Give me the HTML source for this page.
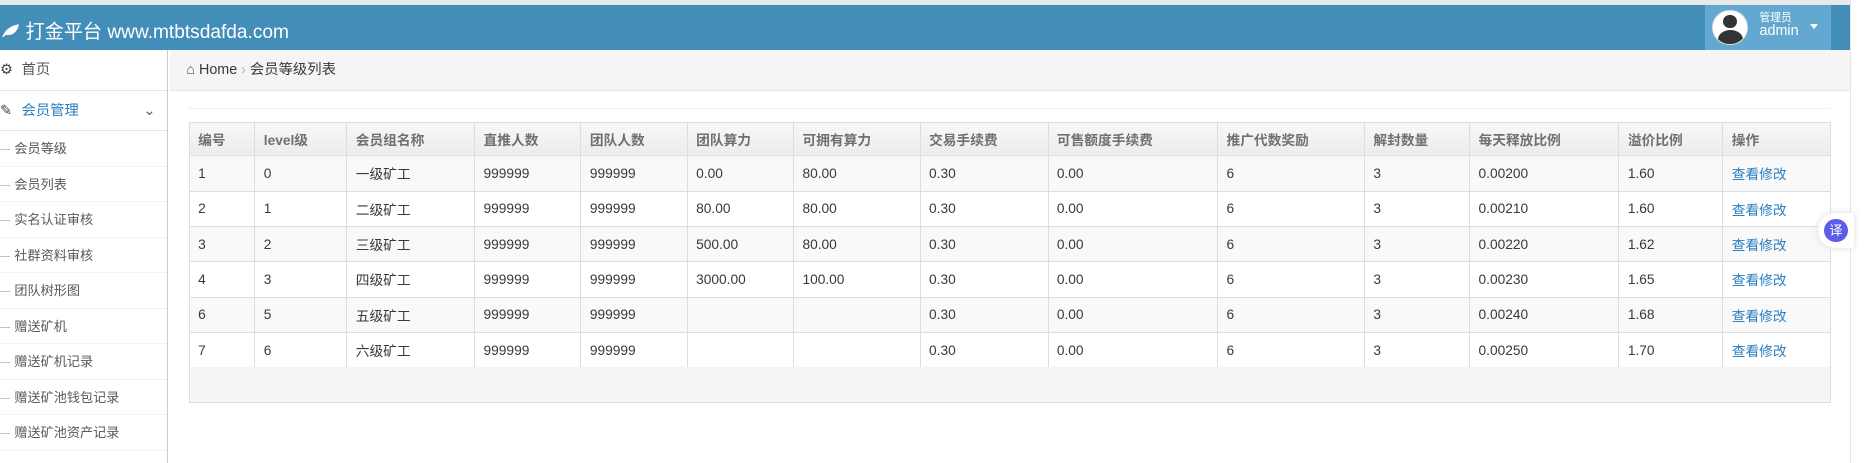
<!DOCTYPE html>
<html><head><meta charset="utf-8"><style>
*{box-sizing:border-box;margin:0;padding:0}
html,body{width:1873px;height:463px;overflow:hidden;background:#fff}
#w{zoom:1.19452;width:1568px;height:388px;position:relative;font-family:"Liberation Sans","Noto Sans CJK SC",sans-serif;font-size:12px;color:#393939}
.top{position:absolute;left:0;top:0;width:1549px;height:4px;background:#e8e8e8}
.hd{position:absolute;left:0;top:4px;width:1549px;height:38px;background:#438eb9;color:#fff}
.logo{position:absolute;left:1px;top:9px;font-size:16px;white-space:nowrap}
.user{position:absolute;left:1427px;top:0;width:106px;height:38px;background:#62a8d1}
.av{position:absolute;left:6px;top:4px;width:30px;height:30px;border-radius:50%;background:#fff;border:1px solid #ddd;overflow:hidden}
.av:before{content:"";position:absolute;left:9px;top:4px;width:11px;height:11px;border-radius:50%;background:#333}
.av:after{content:"";position:absolute;left:4px;top:16px;width:21px;height:16px;border-radius:50% 50% 0 0;background:#333}
.un{position:absolute;left:46px;top:6px;font-size:9px;line-height:11px}
.un b{font-weight:normal;font-size:12px}
.car{position:absolute;left:88px;top:16px;border:4px solid transparent;border-top:5px solid #fff}
.side{position:absolute;left:0;top:42px;width:141px;height:346px;border-right:1px solid #ccc;background:#fff}
.si{height:34px;line-height:34px;border-bottom:1px solid #e5e5e5;padding-left:18px;color:#585858;position:relative;font-size:12px}
.si .ic{position:absolute;left:0;top:0;color:#444}
.si.sub{height:29.7px;line-height:29.7px;border-bottom:1px dotted #e4e4e4;padding-left:12px;font-size:11px}
.si.sub:before{content:"";position:absolute;left:0;top:15px;width:8px;border-top:1px dashed #a9c0d8}
.right{position:absolute;left:1549px;top:0;width:19px;height:388px;background:#fff;border-left:1px solid #e5e5e5}
.bc{position:absolute;left:142px;top:42px;width:1407px;height:34px;background:#f5f5f5;border-bottom:1px solid #e5e5e5;line-height:34px;padding-left:14px;font-size:12px}
.dl{position:absolute;left:158px;top:90px;width:1374px;border-top:1px dotted #e2e2e2}
table{position:absolute;left:158px;top:102px;width:1375px;border-collapse:collapse}
td,th{border:1px solid #ddd;height:29.6px;padding-left:7px;text-align:left;font-size:11.5px;white-space:nowrap}
th{background:linear-gradient(#f8f8f8,#ececec);font-weight:bold;color:#707070;height:28px}
tr:nth-child(even) td{background:#f9f9f9}
td a{color:#2a7fc2;text-decoration:none}
.ft{position:absolute;left:158px;top:307px;width:1375px;height:30px;background:#f5f5f5;border:1px solid #ddd;border-top:none}
.tr{position:absolute;left:1522px;top:178px;width:30px;height:30px;border-radius:15px 0 0 15px;background:#fff;box-shadow:0 0 6px #ddd}
.tr i{position:absolute;left:5px;top:5px;width:20px;height:20px;border-radius:50%;background:#5b5ee8;color:#fff;font-style:normal;font-size:11px;text-align:center;line-height:20px}
</style></head><body><div id="w">
<div class="top"></div>
<div class="hd"><div class="logo"><svg width="16" height="13" viewBox="0 0 16 13" style="vertical-align:-1px"><path d="M1 12C3 6 8 2 15 1C14 7 10 11 4 10C3 11 2 12 1 12Z" fill="#fff"/></svg> 打金平台 www.mtbtsdafda.com</div>
<div class="user"><div class="av"></div><div class="un">管理员<br><b>admin</b></div><div class="car"></div></div></div>
<div class="side">
<div class="si"><span class="ic">&#9881;</span>首页</div>
<div class="si" style="color:#2b7dbc"><span class="ic">&#9998;</span>会员管理<span style="position:absolute;left:120px;color:#666">&#8964;</span></div>
<div class="si sub">会员等级</div><div class="si sub">会员列表</div><div class="si sub">实名认证审核</div><div class="si sub">社群资料审核</div><div class="si sub">团队树形图</div><div class="si sub">赠送矿机</div><div class="si sub">赠送矿机记录</div><div class="si sub">赠送矿池钱包记录</div><div class="si sub">赠送矿池资产记录</div>
</div>
<div class="bc"><span style="color:#555">&#8962;</span> Home <span style="color:#bbb">&#8250;</span> 会员等级列表</div>
<div class="dl"></div>
<table>
<tr><th style="width:55px">编号</th><th style="width:77px">level级</th><th style="width:107px">会员组名称</th><th style="width:89px">直推人数</th><th style="width:89px">团队人数</th><th style="width:89px">团队算力</th><th style="width:106px">可拥有算力</th><th style="width:107px">交易手续费</th><th style="width:142px">可售额度手续费</th><th style="width:123px">推广代数奖励</th><th style="width:88px">解封数量</th><th style="width:125px">每天释放比例</th><th style="width:87px">溢价比例</th><th>操作</th></tr>
<tr><td>1</td><td>0</td><td>一级矿工</td><td>999999</td><td>999999</td><td>0.00</td><td>80.00</td><td>0.30</td><td>0.00</td><td>6</td><td>3</td><td>0.00200</td><td>1.60</td><td><a>查看修改</a></td></tr>
<tr><td>2</td><td>1</td><td>二级矿工</td><td>999999</td><td>999999</td><td>80.00</td><td>80.00</td><td>0.30</td><td>0.00</td><td>6</td><td>3</td><td>0.00210</td><td>1.60</td><td><a>查看修改</a></td></tr>
<tr><td>3</td><td>2</td><td>三级矿工</td><td>999999</td><td>999999</td><td>500.00</td><td>80.00</td><td>0.30</td><td>0.00</td><td>6</td><td>3</td><td>0.00220</td><td>1.62</td><td><a>查看修改</a></td></tr>
<tr><td>4</td><td>3</td><td>四级矿工</td><td>999999</td><td>999999</td><td>3000.00</td><td>100.00</td><td>0.30</td><td>0.00</td><td>6</td><td>3</td><td>0.00230</td><td>1.65</td><td><a>查看修改</a></td></tr>
<tr><td>6</td><td>5</td><td>五级矿工</td><td>999999</td><td>999999</td><td></td><td></td><td>0.30</td><td>0.00</td><td>6</td><td>3</td><td>0.00240</td><td>1.68</td><td><a>查看修改</a></td></tr>
<tr><td>7</td><td>6</td><td>六级矿工</td><td>999999</td><td>999999</td><td></td><td></td><td>0.30</td><td>0.00</td><td>6</td><td>3</td><td>0.00250</td><td>1.70</td><td><a>查看修改</a></td></tr>
</table>
<div class="ft"></div>
<div class="right"></div>
<div class="tr"><i>译</i></div>
</div></body></html>
